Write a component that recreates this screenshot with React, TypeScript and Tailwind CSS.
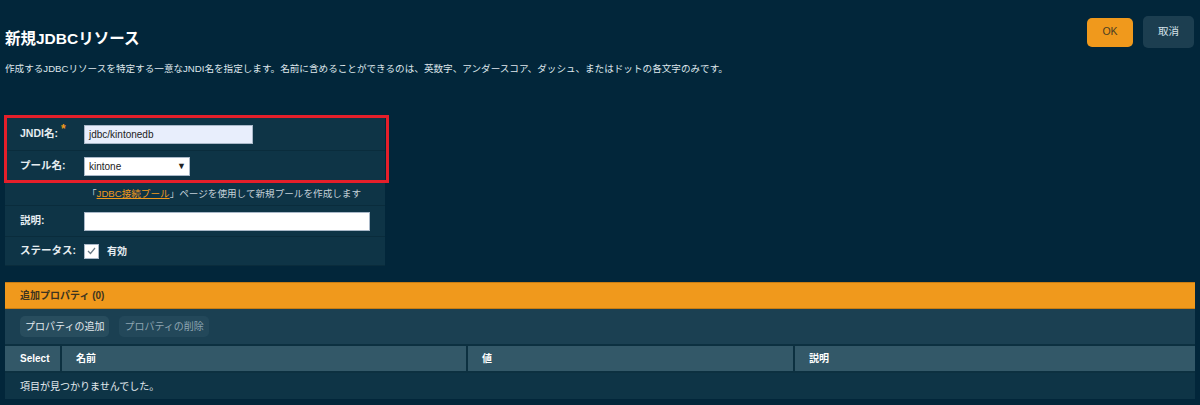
import React from 'react';

const font = { fontFamily: '"Liberation Sans", "Noto Sans CJK JP", sans-serif' };

const FormRow: React.FC<{ label: string; required?: boolean; children: React.ReactNode; h?: string }> = ({
  label,
  required,
  children,
  h = 'h-[31px]',
}) => (
  <div className={`flex items-center ${h} bg-[#0e3446] border-b border-[#0a2c3c]`}>
    <div className="w-[79px] pl-[15px] text-[10.5px] font-bold text-[#e6edf1] flex items-start">
      {label}
      {required && <span className="text-[#f0991c] text-[12px] leading-none ml-[3px] -mt-[3px]">*</span>}
    </div>
    <div className="flex-1 flex items-center">{children}</div>
  </div>
);

export default function App() {
  return (
    <div className="w-[1200px] h-[405px] bg-[#02263a] overflow-hidden text-[#e6edf1]" style={font}>
      {/* header */}
      <div className="flex justify-between items-start">
        <div className="pl-[5px] pt-[29px]">
          <h1 className="text-[15.5px] font-bold text-white leading-[20px]">新規JDBCリソース</h1>
          <p className="mt-[13px] text-[9.6px] text-[#dfe7ec] leading-[14px]">
            作成するJDBCリソースを特定する一意なJNDI名を指定します。名前に含めることができるのは、英数字、アンダースコア、ダッシュ、またはドットの各文字のみです。
          </p>
        </div>
        <div className="flex items-center gap-[10px] pt-[16px] pr-[6px]">
          <button className="w-[46px] h-[29px] rounded-[5px] bg-[#f0991c] text-[10.5px] text-[#4b3e22]">OK</button>
          <button className="w-[51px] h-[32px] rounded-[5px] bg-[#1c3e50] text-[10.5px] text-[#d5e1e8]">取消</button>
        </div>
      </div>

      {/* form */}
      <div className="mt-[42px] ml-[5px] w-[380px] relative">
        <FormRow label="JNDI名:" required h="h-[33px]">
          <div className="w-[169px] h-[19px] bg-[#e8eefc] border border-[#a9b8c8] text-[10px] text-[#222] pl-[4px] leading-[17px]">
            jdbc/kintonedb
          </div>
        </FormRow>
        <FormRow label="プール名:" h="h-[31px]">
          <div className="w-[106px] h-[19px] bg-white border border-[#a9b8c8] text-[10px] text-[#222] pl-[4px] pr-[3px] leading-[17px] flex justify-between items-center">
            <span>kintone</span>
            <span className="text-[9px]">▼</span>
          </div>
        </FormRow>
        <div className="h-[24px] bg-[#0e3446] border-b border-[#0a2c3c] pl-[82px] pt-[5px] text-[9.6px] text-[#c3d0d8] whitespace-nowrap">
          「<span className="text-[#f0991c] underline">JDBC接続プール</span>」ページを使用して新規プールを作成します
        </div>
        <FormRow label="説明:" h="h-[31px]">
          <div className="w-[286px] h-[19px] bg-white border border-[#a9b8c8]" />
        </FormRow>
        <FormRow label="ステータス:" h="h-[29px]">
          <div className="flex items-center gap-[8px]">
            <div className="w-[15px] h-[15px] bg-white border border-[#a9b8c8] flex items-center justify-center">
              <svg width="9" height="8" viewBox="0 0 9 8">
                <path d="M1 4 L3.5 6.5 L8 1" fill="none" stroke="#6a7a86" strokeWidth="1.2" />
              </svg>
            </div>
            <span className="text-[10px] font-bold text-[#e6edf1]">有効</span>
          </div>
        </FormRow>
        {/* highlight box */}
        <div className="absolute left-[-1px] top-[-3px] w-[385px] h-[68px] border-[3px] border-[#e51f2a] pointer-events-none" />
      </div>

      {/* additional properties */}
      <div className="mt-[16px] mx-[5px] w-[1190px]">
        <div className="h-[27px] bg-[#f0991c] border-y border-[#c97d14] pl-[15px] flex items-center text-[10px] font-bold text-[#3d3420]">
          追加プロパティ (0)
        </div>
        <div className="h-[37px] bg-[#1b4052] flex items-center gap-[10px] pl-[15px] border-b-2 border-[#0c3040]">
          <button className="h-[21px] px-[5px] rounded-[5px] bg-[#284d5e] text-[10px] text-[#e3eaee]">プロパティの追加</button>
          <button className="h-[21px] px-[5px] rounded-[5px] bg-[#23485a] text-[10px] text-[#8ea5b1]">プロパティの削除</button>
        </div>
        <div className="flex h-[27px] bg-[#335868] text-[10px] font-bold text-white border-b-2 border-[#0c3040]">
          <div className="w-[57px] pl-[15px] flex items-center border-r-2 border-[#0c3040]">Select</div>
          <div className="w-[406px] pl-[14px] flex items-center border-r-2 border-[#0c3040]">名前</div>
          <div className="w-[327px] pl-[14px] flex items-center border-r-2 border-[#0c3040]">値</div>
          <div className="flex-1 pl-[14px] flex items-center">説明</div>
        </div>
        <div className="h-[26px] bg-[#0e3446] pl-[15px] flex items-center text-[10px] text-[#e3eaee]">
          項目が見つかりませんでした。
        </div>
      </div>
    </div>
  );
}
